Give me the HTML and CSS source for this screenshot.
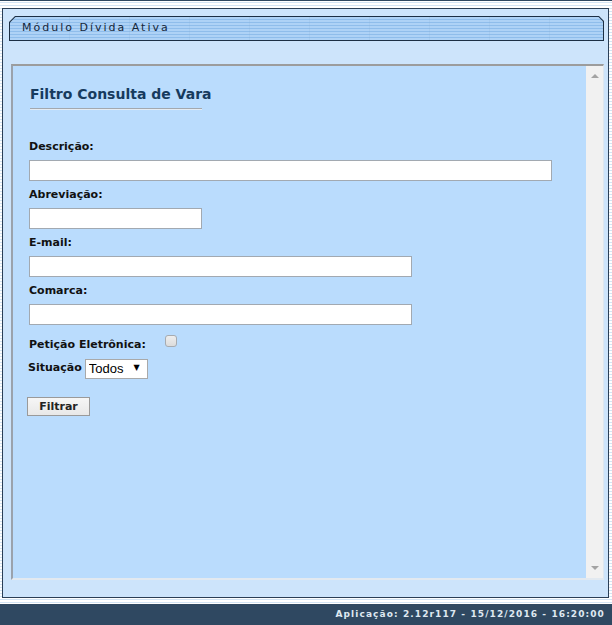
FILE: index.html
```html
<!DOCTYPE html>
<html lang="pt-BR">
<head>
<meta charset="utf-8">
<title>Módulo Dívida Ativa</title>
<link rel="stylesheet" href="styles.css">
</head>
<body>
<div class="topline"></div>
<div class="page">
  <div class="panel">
    <div class="tab">
      <div class="tab-inner"><span class="tab-title">Módulo Dívida Ativa</span></div>
    </div>
    <div class="frame">
      <div class="frame-content">
        <h1 class="title">Filtro Consulta de Vara</h1>
        <form class="form">
          <label class="lbl">Descrição:</label>
          <input class="txt w-desc" type="text">
          <label class="lbl">Abreviação:</label>
          <input class="txt w-abrev" type="text">
          <label class="lbl">E-mail:</label>
          <input class="txt w-mid" type="text">
          <label class="lbl">Comarca:</label>
          <input class="txt w-mid" type="text">
          <div class="row-check">
            <span class="lbl-inline">Petição Eletrônica:</span>
            <input class="chk" type="checkbox">
          </div>
          <div class="row-sel">
            <span class="lbl-inline">Situação</span>
            <span class="sel-wrap">
              <select class="sel"><option>Todos</option></select>
              <span class="sel-arrow">▼</span>
            </span>
          </div>
          <button class="btn" type="button">Filtrar</button>
        </form>
      </div>
      <div class="scrollbar">
        <span class="arr arr-up"></span>
        <span class="arr arr-down"></span>
      </div>
    </div>
  </div>
</div>
<div class="gap"></div>
<div class="footer">Aplicação: 2.12r117 - 15/12/2016 - 16:20:00</div>
</body>
</html>
```

FILE: styles.css
```css
html, body {
  margin: 0;
  padding: 0;
}
body {
  width: 612px;
  height: 625px;
  overflow: hidden;
  font-family: "DejaVu Sans", Verdana, sans-serif;
  background: repeating-linear-gradient(to bottom, #ffffff 0, #ffffff 2px, #d3e4f4 2px, #d3e4f4 3px);
}
.topline {
  height: 1px;
  background: #2f4861;
}
.page {
  padding: 7px 3px 0 2px;
}
.panel {
  width: 605px;
  height: 588px;
  border: 1px solid #2b3f56;
  background: #cde4fb;
  padding: 0;
  display: flex;
  flex-direction: column;
}
.tab {
  margin: 7px 4px 0 6px;
  height: 25px;
  background: #1c2f44;
  clip-path: polygon(6px 0, calc(100% - 5px) 0, 100% 5px, 100% 100%, 0 100%, 0 6px);
  padding: 1px;
  box-sizing: border-box;
}
.tab-inner {
  height: 100%;
  clip-path: polygon(5.5px 0, calc(100% - 4.5px) 0, 100% 4.5px, 100% 100%, 0 100%, 0 5.5px);
  background:
    repeating-linear-gradient(to right, transparent 0, transparent 59px, rgba(130,170,210,0.18) 59px, rgba(130,170,210,0.18) 60px),
    repeating-linear-gradient(to bottom, #aed2f6 0, #aed2f6 2px, #8fbdeb 2px, #8fbdeb 3px);
  display: flex;
  align-items: center;
  padding-left: 12px;
}
.tab-title {
  font-size: 11px;
  letter-spacing: 2px;
  color: #14263a;
  line-height: 14px;
  margin-top: -1px;
}
.frame {
  margin: 23px 4px 0 8px;
  height: 516px;
  box-sizing: border-box;
  border-top: 2px solid #9c9c9c;
  border-left: 2px solid #9aa2ac;
  border-right: 1px solid #dfe7ef;
  border-bottom: 2px solid #e2e9f0;
  background: #badcfd;
  display: flex;
}
.frame-content {
  flex: 1;
  padding: 20px 0 0 16px;
}
.title {
  margin: 0 0 0 1px;
  width: 172px;
  font-size: 14px;
  line-height: 17px;
  font-weight: bold;
  color: #163a5e;
  padding-bottom: 5px;
  border-bottom: 1px solid #a3a8ae;
  box-shadow: 0 1px 0 #e4ecf4;
  white-space: nowrap;
}
.form {
  margin-top: 31px;
}
.lbl {
  display: block;
  font-size: 11px;
  font-weight: bold;
  line-height: 14px;
  color: #111;
  margin: 0 0 6px 0;
}
.txt + .lbl {
  margin-top: 7px;
}
.txt {
  display: block;
  box-sizing: border-box;
  height: 21px;
  border: 1px solid #a2a9b1;
  background: #fff;
  margin: 0;
  padding: 0 2px;
}
.w-desc { width: 523px; }
.w-abrev { width: 173px; }
.w-mid { width: 383px; }
.lbl-inline {
  font-size: 11px;
  font-weight: bold;
  line-height: 14px;
  color: #111;
}
.row-check {
  display: flex;
  align-items: flex-start;
  margin-top: 10px;
  height: 14px;
}
.row-check .lbl-inline {
  margin-top: 3px;
}
.chk {
  appearance: none;
  -webkit-appearance: none;
  width: 12px;
  height: 12px;
  margin: 0 0 0 19px;
  border: 1px solid #a7abb0;
  border-radius: 3px;
  background: linear-gradient(#eeeeee, #dcdcdc);
  box-sizing: border-box;
}
.row-sel {
  display: flex;
  align-items: center;
  margin-top: 9px;
  margin-left: -1px;
  height: 20px;
}
.row-sel .lbl-inline {
  margin-right: 3px;
}
.sel-wrap {
  position: relative;
  display: inline-block;
  height: 20px;
}
.sel {
  appearance: none;
  -webkit-appearance: none;
  width: 63px;
  height: 20px;
  box-sizing: border-box;
  border: 1px solid #a9a9a9;
  background: #fff;
  font-family: "Liberation Sans", Arial, sans-serif;
  font-size: 13px;
  color: #000;
  padding: 0 0 0 3px;
  margin: 0;
  border-radius: 0;
}
.sel-arrow {
  position: absolute;
  right: 8px;
  top: 5px;
  font-size: 8px;
  line-height: 9px;
  color: #000;
  pointer-events: none;
}
.btn {
  display: block;
  margin: 19px 0 0 -2px;
  width: 63px;
  height: 19px;
  box-sizing: border-box;
  border: 1px solid #9a9a9a;
  background: linear-gradient(#f6f6f6, #e8e8e8);
  font-family: "DejaVu Sans", Verdana, sans-serif;
  font-size: 11px;
  font-weight: bold;
  color: #222;
  padding: 0;
  border-radius: 0;
}
.scrollbar {
  width: 17px;
  background: #f1f1f1;
  display: flex;
  flex-direction: column;
  justify-content: space-between;
  align-items: center;
  padding: 8px 0 8px;
}
.arr {
  width: 0;
  height: 0;
  border-left: 4px solid transparent;
  border-right: 4px solid transparent;
}
.arr-up {
  border-bottom: 4px solid #a3a3a3;
}
.arr-down {
  border-top: 4px solid #a3a3a3;
}
.gap {
  height: 6px;
}
.footer {
  height: 21px;
  background: #2f4861;
  color: #dfe8f1;
  font-size: 9px;
  font-weight: bold;
  letter-spacing: 1.1px;
  line-height: 21px;
  text-align: right;
  padding-right: 7px;
  white-space: nowrap;
}
```
